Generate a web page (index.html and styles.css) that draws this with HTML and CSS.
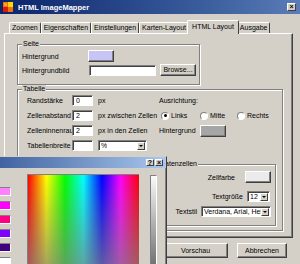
FILE: index.html
```html
<!DOCTYPE html>
<html lang="de">
<head>
    <meta charset="UTF-8">
    <title>HTML ImageMapper</title>
    <link rel="stylesheet" href="styles.css">
</head>
<body>
    <!-- Title bar -->
    <div class="titlebar">
        <svg class="app-icon" viewBox="0 0 10 10">
            <rect x="0" y="0" width="10" height="10" fill="#f07010"/>
            <rect x="5" y="0" width="5" height="5" fill="#ffd800"/>
            <rect x="0" y="5" width="5" height="5" fill="#e01808"/>
            <rect x="1" y="1" width="3" height="3" fill="#ffa020"/>
        </svg>
        <span class="title">HTML ImageMapper</span>
        <span class="title-btn close-btn">&#215;</span>
    </div>

    <!-- Tabs -->
    <div class="tabs">
        <span class="tab">Zoomen</span>
        <span class="tab">Eigenschaften</span>
        <span class="tab">Einstellungen</span>
        <span class="tab">Karten-Layout</span>
        <span class="tab active">HTML Layout</span>
        <span class="tab">Ausgabe</span>
    </div>

    <!-- Tab page -->
    <div class="panel">
        <fieldset class="group group-seite">
            <legend>Seite</legend>
            <div class="row row-first">
                <span class="label-wide">Hintergrund</span>
                <span class="swatch swatch-lavender"></span>
            </div>
            <div class="row row-second">
                <span class="label-wide">Hintergrundbild</span>
                <span class="textbox textbox-file"></span>
                <span class="button button-browse">Browse...</span>
            </div>
        </fieldset>

        <fieldset class="group group-tabelle">
            <legend>Tabelle</legend>
            <div class="table-rows">
                <div class="row table-row">
                    <div class="left-part">
                        <span class="field-label">Randstärke</span>
                        <span class="textbox textbox-small">0</span>
                        <span class="suffix">px</span>
                    </div>
                    <span>Ausrichtung:</span>
                </div>
                <div class="row table-row">
                    <div class="left-part">
                        <span class="field-label">Zellenabstand</span>
                        <span class="textbox textbox-small">2</span>
                        <span class="suffix">px zwischen Zellen</span>
                    </div>
                    <span class="radio-option option-links"><span class="radio checked"></span>Links</span>
                    <span class="radio-option option-mitte"><span class="radio"></span>Mitte</span>
                    <span class="radio-option"><span class="radio"></span>Rechts</span>
                </div>
                <div class="row table-row">
                    <div class="left-part">
                        <span class="field-label">Zelleninnenraum</span>
                        <span class="textbox textbox-small">2</span>
                        <span class="suffix">px in den Zellen</span>
                    </div>
                    <span class="label-bg">Hintergrund</span>
                    <span class="swatch swatch-gray"></span>
                </div>
                <div class="row table-row">
                    <div class="left-part">
                        <span class="field-label">Tabellenbreite</span>
                        <span class="textbox textbox-small"></span>
                        <span class="select select-unit"><span class="select-value">%</span><span class="drop-btn"></span></span>
                    </div>
                </div>
            </div>

            <fieldset class="group group-daten">
                <legend>Datenzellen</legend>
                <div class="row daten-row row-farbe">
                    <span class="daten-label label-farbe">Zellfarbe</span>
                    <span class="swatch swatch-light"></span>
                </div>
                <div class="row daten-row row-groesse">
                    <span class="daten-label">Textgröße</span>
                    <span class="select select-size"><span class="select-value">12</span><span class="drop-btn"></span></span>
                </div>
                <div class="row daten-row row-stil">
                    <span class="daten-label">Textstil</span>
                    <span class="select select-font"><span class="select-value">Verdana, Arial, Helvetica</span><span class="drop-btn"></span></span>
                </div>
            </fieldset>
        </fieldset>
    </div>

    <!-- Dialog buttons -->
    <div class="button-row">
        <span class="button button-preview">Vorschau</span>
        <span class="button button-cancel">Abbrechen</span>
    </div>

    <!-- Colour picker dialog lying over the window -->
    <div class="color-dialog">
        <div class="dialog-title">
            <span class="title-btn">?</span>
            <span class="title-btn">&#215;</span>
        </div>
        <div class="dialog-body">
            <div class="swatch-column">
                <span class="basic-color" style="background-color: #ff80ff"></span>
                <span class="basic-color" style="background-color: #ff00ff"></span>
                <span class="basic-color" style="background-color: #ff0080"></span>
                <span class="basic-color" style="background-color: #8000ff"></span>
                <span class="basic-color" style="background-color: #400080"></span>
                <span class="basic-color" style="background-color: #ffffff"></span>
            </div>
            <div class="spectrum"></div>
            <div class="lum-bar"></div>
        </div>
    </div>
</body>
</html>
```

FILE: styles.css
```css
/* Basic Reset */
* {
    margin: 0;
    padding: 0;
    box-sizing: border-box;
}

body {
    width: 300px;
    height: 264px;
    overflow: hidden;
    position: relative;
    background-color: #d4d0c8;
    font-family: "Liberation Sans", Arial, sans-serif;
    font-size: 7px;
    color: #000;
}

/* Title bar */
.titlebar {
    height: 14px;
    display: flex;
    align-items: center;
    padding: 0 4px 0 3px;
    background: linear-gradient(to right, #0a246a, #3c5f9e 70%, #5a7cb8);
    color: #fff;
}

.app-icon {
    width: 10px;
    height: 10px;
    margin-right: 5px;
}

.title {
    font-weight: bold;
    font-size: 7.5px;
}

.title-btn {
    width: 9px;
    height: 8px;
    background-color: #d4d0c8;
    border: 1px solid;
    border-color: #fff #404040 #404040 #fff;
    color: #000;
    font-size: 7px;
    font-weight: bold;
    line-height: 6px;
    text-align: center;
}

.close-btn {
    margin-left: auto;
}

/* Tabs */
.tabs {
    height: 19px;
    display: flex;
    align-items: flex-end;
    padding-left: 9px;
}

.tab {
    height: 11px;
    padding: 0 2px;
    line-height: 9px;
    border-top: 1px solid #fff;
    border-left: 1px solid #fff;
    border-right: 1px solid #404040;
    border-radius: 2px 2px 0 0;
    white-space: nowrap;
}

.tab.active {
    height: 14px;
    margin: 0 -2px -1px;
    padding: 1px 4px 0;
    background-color: #d4d0c8;
    position: relative;
    z-index: 1;
}

/* Tab page */
.panel {
    width: 289px;
    height: 205px;
    margin-left: 4px;
    padding: 6px 0 0 12px;
    border: 1px solid;
    border-color: #fff #404040 #404040 #fff;
    box-shadow: inset -1px -1px 0 #808080;
}

/* Group boxes */
.group {
    border: 1px solid #808080;
    box-shadow: 1px 1px 0 #fff, inset 1px 1px 0 #fff;
    padding: 2px 0 0 4px;
}

.group legend {
    padding: 0 1px;
    line-height: 8px;
    background-color: #d4d0c8;
}

.group-seite {
    width: 183px;
    padding-bottom: 7px;
}

.group-tabelle {
    width: 266px;
    padding-bottom: 4px;
}

.group-daten {
    width: 122px;
    margin: 9px 0 0 132px;
    padding: 3px 4px 8px 4px;
}

.row {
    display: flex;
    align-items: center;
}

.row-first {
    height: 12px;
}

.row-second {
    height: 13px;
    margin-top: 2px;
}

.label-wide {
    width: 66px;
    white-space: nowrap;
}

/* Controls */
.swatch {
    width: 26px;
    height: 12px;
    border: 1px solid;
    border-color: #fff #404040 #404040 #fff;
    box-shadow: inset -1px -1px 0 #808080;
}

.swatch-lavender {
    background-color: #c8c4f6;
}

.swatch-gray {
    background-color: #a6a6a6;
}

.swatch-light {
    background-color: #ebebeb;
}

.textbox {
    height: 11px;
    padding-left: 3px;
    line-height: 9px;
    background-color: #fff;
    border: 1px solid;
    border-color: #808080 #fff #fff #808080;
    box-shadow: inset 1px 1px 0 #404040;
}

.textbox-file {
    width: 67px;
    margin-left: 1px;
}

.textbox-small {
    width: 21px;
}

.button {
    display: flex;
    align-items: center;
    justify-content: center;
    border: 1px solid;
    border-color: #fff #404040 #404040 #fff;
    box-shadow: inset -1px -1px 0 #808080;
}

.button-browse {
    width: 36px;
    height: 12px;
    margin: -2px 0 0 4px;
}

/* Tabelle rows */
.table-rows {
    padding-left: 5px;
    display: flex;
    flex-direction: column;
    gap: 4px;
}

.table-row {
    height: 11px;
}

.left-part {
    width: 132px;
    display: flex;
    align-items: center;
}

.field-label {
    width: 45px;
    overflow: hidden;
    white-space: nowrap;
}

.suffix {
    margin-left: 5px;
    white-space: nowrap;
}

.radio-option {
    display: flex;
    align-items: center;
    gap: 2px;
    margin-left: 2px;
    width: 39px;
}

.option-mitte {
    margin-left: 0;
    width: 35px;
}

.radio {
    width: 8px;
    height: 8px;
    border-radius: 50%;
    background-color: #fff;
    border: 1px solid;
    border-color: #808080 #fff #fff #808080;
    display: flex;
    align-items: center;
    justify-content: center;
}

.radio.checked::after {
    content: "";
    width: 3px;
    height: 3px;
    border-radius: 50%;
    background-color: #000;
}

.label-bg {
    width: 41px;
}

.table-row .swatch-gray {
    margin-top: 1px;
}

/* Select boxes */
.select {
    height: 11px;
    display: flex;
    align-items: center;
    justify-content: space-between;
    background-color: #fff;
    border: 1px solid;
    border-color: #808080 #fff #fff #808080;
    box-shadow: inset 1px 1px 0 #404040;
    padding: 1px 1px 1px 2px;
}

.select-value {
    overflow: hidden;
    white-space: nowrap;
    line-height: 8px;
}

.drop-btn {
    flex: none;
    width: 8px;
    height: 8px;
    background-color: #d4d0c8;
    border: 1px solid;
    border-color: #fff #404040 #404040 #fff;
    display: flex;
    align-items: center;
    justify-content: center;
}

.drop-btn::after {
    content: "";
    border-left: 2px solid transparent;
    border-right: 2px solid transparent;
    border-top: 2px solid #000;
}

.select-unit {
    width: 49px;
    margin-left: 5px;
}

.select-size {
    width: 23px;
    margin-right: 1px;
}

.select-font {
    width: 70px;
}

/* Datenzellen rows */
.daten-row {
    justify-content: flex-end;
}

.daten-label {
    margin-right: 4px;
}

.label-farbe {
    margin-right: 10px;
}

.row-groesse {
    margin-top: 8px;
}

.row-stil {
    margin-top: 4px;
}

/* Bottom buttons */
.button-row {
    display: flex;
    justify-content: flex-end;
    gap: 9px;
    padding: 5px 13px 0 0;
}

.button-row .button {
    height: 15px;
}

.button-preview {
    width: 65px;
}

.button-cancel {
    width: 50px;
}

/* Colour picker dialog (overlaps the window) */
.color-dialog {
    position: absolute;
    left: -12px;
    top: 156px;
    width: 179px;
    height: 120px;
    background-color: #d4d0c8;
    border: 1px solid;
    border-color: #d4d0c8 #404040 #404040 #d4d0c8;
    box-shadow: inset 1px 1px 0 #fff, inset -1px -1px 0 #808080;
}

.dialog-title {
    height: 11px;
    display: flex;
    align-items: center;
    justify-content: flex-end;
    gap: 1px;
    padding-right: 3px;
    background: linear-gradient(to right, #3a5c9c, #7c9ccc 60%, #a8c8ee);
}

.dialog-title .title-btn {
    width: 8px;
    height: 7px;
    line-height: 5px;
}

.dialog-body {
    display: flex;
    align-items: flex-start;
    padding-top: 6px;
}

.swatch-column {
    width: 22px;
    padding-top: 13px;
    display: flex;
    flex-direction: column;
    gap: 5px;
}

.basic-color {
    height: 9px;
    border: 1px solid;
    border-color: #808080 #fff #fff #808080;
}

.spectrum {
    width: 112px;
    height: 100px;
    margin-left: 16px;
    border-top: 1px solid #808080;
    border-left: 1px solid #808080;
    background:
        linear-gradient(rgba(128, 128, 128, 0), rgba(128, 128, 128, 0.7) 90px),
        linear-gradient(to right, #f00, #ff0, #0f0, #0ff, #00f, #f0f, #f00);
}

.lum-bar {
    width: 7px;
    height: 100px;
    margin: 1px 0 0 11px;
    border: 1px solid;
    border-color: #808080 #fff #fff #808080;
    background: linear-gradient(#fafafa, #707070 90px);
}
```
